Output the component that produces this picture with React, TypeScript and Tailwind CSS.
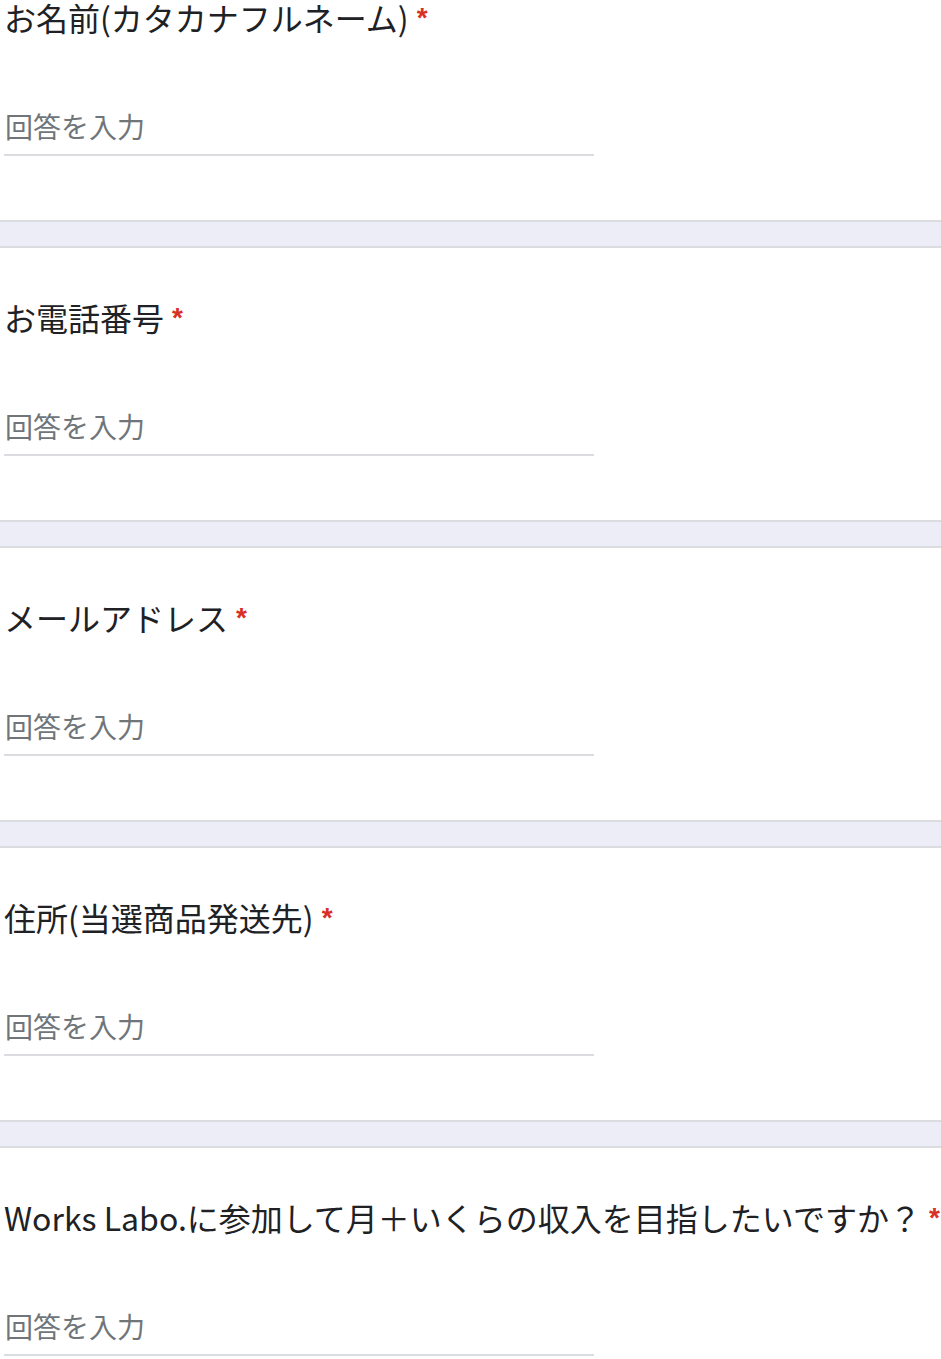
const questions = [
  'お名前(カタカナフルネーム)',
  'お電話番号',
  'メールアドレス',
  '住所(当選商品発送先)',
  'Works Labo.に参加して月＋いくらの収入を目指したいですか？',
];

function Question({ title }: { title: string }) {
  return (
    <div className="bg-white h-[272px] pt-[48px]">
      {/* Question title */}
      <div className="pl-[4px] text-[32px] leading-[42px] text-[#202124] whitespace-nowrap">
        {title}
        <span
          className="ml-[8px] text-[28px] leading-none font-bold text-[#d93025] align-[4px]"
          style={{ fontFamily: '"Liberation Sans", Arial, sans-serif' }}
        >
          *
        </span>
      </div>

      {/* Short answer input */}
      <div className="mt-[70px] ml-[4px] w-[590px] pb-[10px] border-b-2 border-[#dadce0]">
        <div className="pl-px text-[28px] leading-[36px] text-[#70757a]">回答を入力</div>
      </div>
    </div>
  );
}

export default function App() {
  return (
    <div
      className="w-[941px] h-[1359px] overflow-hidden bg-white"
      style={{ fontFamily: '"Noto Sans CJK JP", "Noto Sans", sans-serif' }}
    >
      <div className="-mt-[52px]">
        {questions.map((q, i) => (
          <div key={q}>
            <Question title={q} />
            {i < questions.length - 1 && (
              <div className="h-[28px] bg-[#ecedf7] border-y-2 border-[#dadce0]" />
            )}
          </div>
        ))}
      </div>
    </div>
  );
}
